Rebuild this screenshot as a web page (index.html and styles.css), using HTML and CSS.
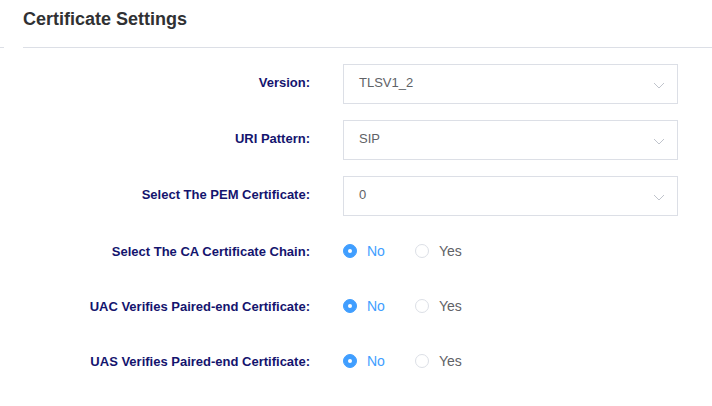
FILE: index.html
```html
<!DOCTYPE html>
<html>
<head>
<meta charset="utf-8">
<link rel="stylesheet" href="styles.css">
</head>
<body>
<div class="page">
  <div class="header">
    <span class="stub"></span>
    <h2 class="title">Certificate Settings</h2>
  </div>
  <div class="form">
    <div class="row select-row">
      <label class="label">Version:</label>
      <div class="select"><span>TLSV1_2</span><svg class="chev" width="12" height="7" viewBox="0 0 12 7"><path d="M1 1 L6 6 L11 1" fill="none" stroke="#c0c4cc" stroke-width="1"/></svg></div>
    </div>
    <div class="row select-row">
      <label class="label">URI Pattern:</label>
      <div class="select"><span>SIP</span><svg class="chev" width="12" height="7" viewBox="0 0 12 7"><path d="M1 1 L6 6 L11 1" fill="none" stroke="#c0c4cc" stroke-width="1"/></svg></div>
    </div>
    <div class="row select-row">
      <label class="label">Select The PEM Certificate:</label>
      <div class="select"><span>0</span><svg class="chev" width="12" height="7" viewBox="0 0 12 7"><path d="M1 1 L6 6 L11 1" fill="none" stroke="#c0c4cc" stroke-width="1"/></svg></div>
    </div>
    <div class="row radio-row">
      <label class="label">Select The CA Certificate Chain:</label>
      <div class="radios">
        <span class="radio checked"><span class="dot"></span><span class="rtext">No</span></span>
        <span class="radio"><span class="dot"></span><span class="rtext">Yes</span></span>
      </div>
    </div>
    <div class="row radio-row">
      <label class="label">UAC Verifies Paired-end Certificate:</label>
      <div class="radios">
        <span class="radio checked"><span class="dot"></span><span class="rtext">No</span></span>
        <span class="radio"><span class="dot"></span><span class="rtext">Yes</span></span>
      </div>
    </div>
    <div class="row radio-row">
      <label class="label">UAS Verifies Paired-end Certificate:</label>
      <div class="radios">
        <span class="radio checked"><span class="dot"></span><span class="rtext">No</span></span>
        <span class="radio"><span class="dot"></span><span class="rtext">Yes</span></span>
      </div>
    </div>
  </div>
</div>
</body>
</html>
```
FILE: styles.css
```css
* { box-sizing: border-box; }
html, body { margin: 0; padding: 0; background: #fff; }
body { font-family: "Liberation Sans", Arial, sans-serif; }
.page { width: 712px; height: 406px; overflow: hidden; }
.header {
  position: relative;
  height: 48px;
  margin-left: 23px;
  border-bottom: 1px solid #dcdfe6;
  padding-top: 8px;
}
.stub {
  position: absolute;
  left: -23px;
  bottom: -1px;
  width: 4px;
  height: 1px;
  background: #dcdfe6;
}
.title {
  margin: 0;
  font-size: 18px;
  line-height: 22px;
  font-weight: bold;
  color: #303133;
}
.form { padding-top: 16px; }
.row {
  display: flex;
  align-items: center;
  height: 40px;
  margin-bottom: 16px;
}
.radio-row { height: 38px; margin-bottom: 17px; }
.label {
  width: 310px;
  text-align: right;
  font-size: 13px;
  font-weight: bold;
  color: #14146e;
  margin-right: 33px;
}
.select-row .label { padding-bottom: 4px; }
.select {
  width: 335px;
  height: 40px;
  border: 1px solid #dcdfe6;
  display: flex;
  align-items: center;
  justify-content: space-between;
  padding: 0 12px 3px 15px;
  font-size: 13px;
  color: #606266;
}
.chev { margin-top: 5px; }
.radios { display: flex; align-items: center; }
.radio {
  display: flex;
  align-items: center;
  margin-right: 30px;
  font-size: 14px;
  color: #606266;
}
.dot {
  width: 14px;
  height: 14px;
  border-radius: 50%;
  border: 1px solid #dcdfe6;
  background: #fff;
  position: relative;
}
.radio.checked .dot { border-color: #409eff; background: #409eff; }
.radio.checked .dot::after {
  content: "";
  position: absolute;
  left: 50%;
  top: 50%;
  width: 4px;
  height: 4px;
  margin: -2px 0 0 -2px;
  border-radius: 50%;
  background: #fff;
}
.rtext { padding-left: 10px; }
.radio.checked .rtext { color: #409eff; }
```
